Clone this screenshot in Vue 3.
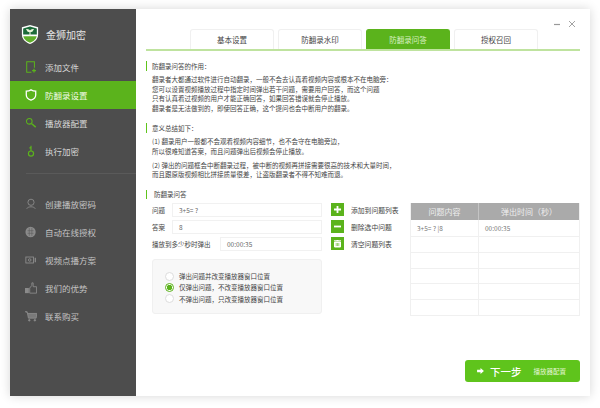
<script setup>
const topNav = [
  { t: '添加文件', i: 'file' },
  { t: '防翻录设置', i: 'shield', active: true },
  { t: '播放器配置', i: 'search' },
  { t: '执行加密', i: 'key' }
]
const bottomNav = [
  { t: '创建播放密码', i: 'user' },
  { t: '自动在线授权', i: 'globe' },
  { t: '视频点播方案', i: 'camera' },
  { t: '我们的优势', i: 'thumb' },
  { t: '联系购买', i: 'cart' }
]
const tabs = ['基本设置', '防翻录水印', '防翻录问答', '授权召回']
const intro = [
  '翻录者大都通过软件进行自动翻录，一般不会去认真看视频内容或根本不在电脑旁：',
  '您可以设置视频播放过程中指定时间弹出若干问题，需要用户回答，而这个问题',
  '只有认真看过视频的用户才能正确回答，如果回答错误就会停止播放。',
  '翻录者是无法做到的，即使回答正确，这个提问也会中断用户的翻录。'
]
const radios = [
  { t: '弹出问题并改变播放器窗口位置' },
  { t: '仅弹出问题，不改变播放器窗口位置', on: true },
  { t: '不弹出问题，只改变播放器窗口位置' }
]
const rows = [['3+5= ? |8', '00:00:35'], ['', ''], ['', ''], ['', ''], ['', ''], ['', '']]
</script>

<template>
  <div class="page">
    <div class="window">
      <aside class="side">
        <div class="brand">
          <svg class="logo" viewBox="0 0 20 22">
            <path d="M10 .5 L19 3 V11 C19 17 14 20 10 21.5 C6 20 1 17 1 11 V3 Z" fill="#fff"/>
            <path d="M10 2 L17.6 4.2 V11 H2.4 V4.2 Z" fill="#1d6b3a"/>
            <path d="M2.6 13 H17.4 C16.6 17 13 19 10 20.2 C7 19 3.4 17 2.6 13 Z" fill="#5fae2a"/>
            <path d="M10 12.5 V8 M10 8 C8.5 8 7 7 6.5 5.5 C8.2 5.5 9.6 6.4 10 8 C10.4 6.4 11.8 5.5 13.5 5.5 C13 7 11.5 8 10 8" stroke="#e8f3d8" stroke-width="1.2" fill="#e8f3d8"/>
          </svg>
          <span>金狮加密</span>
        </div>
        <nav class="nav">
          <div v-for="n in topNav" :key="n.t" class="item" :class="{ active: n.active }">
            <svg class="ico" viewBox="0 0 14 14" fill="none" stroke="#5bb31c" stroke-width="1.2">
              <template v-if="n.i === 'file'">
                <path d="M7.5 13 H2 V1 H11 V8"/><path d="M10.500 9 V13.500 M8.300 11.200 H12.800" stroke-width="1.500"/>
              </template>
              <path v-else-if="n.i === 'shield'" d="M7 1 C9 2.2 10.5 2.5 12.5 2.5 V7 C12.5 10 10 12 7 13 C4 12 1.500 10 1.500 7 V2.500 C3.500 2.500 5 2.200 7 1 Z" stroke="#fff" stroke-width="1.500"/>
              <template v-else-if="n.i === 'search'">
                <circle cx="5" cy="5" r="3.300"/><path d="M7.500 7.500 L12.500 11.800" stroke-width="1.600"/>
              </template>
              <template v-else>
                <circle cx="7" cy="10" r="3" stroke-width="1.400"/><path d="M7 7 V1 M7 2.800 L5.200 3.600" stroke-width="1.400"/>
              </template>
            </svg>
            <span>{{ n.t }}</span>
          </div>
        </nav>
        <div class="divider"></div>
        <nav class="nav lower">
          <div v-for="n in bottomNav" :key="n.t" class="item dim">
            <svg class="ico" viewBox="0 0 14 14" fill="none" stroke="#8e8e8e" stroke-width="1">
              <template v-if="n.i === 'user'">
                <circle cx="7" cy="5" r="3.600"/><path d="M2 12.500 C3.500 9.500 10.500 9.500 12 12.500"/>
              </template>
              <template v-else-if="n.i === 'globe'">
                <circle cx="6.500" cy="7" r="6" fill="#8a8a8a" stroke="none"/><path d="M3 5.500 H10 M3 8.500 H10 M5 2.500 V11.500 M8 2.500 V11.500" stroke="#5d5d5d" stroke-width=".7"/>
              </template>
              <template v-else-if="n.i === 'camera'">
                <rect x="1" y="3.500" width="9" height="7"/><circle cx="5.500" cy="7" r="1.500"/><path d="M12 4.500 V9.500" stroke-width="1.400"/>
              </template>
              <template v-else-if="n.i === 'thumb'">
                <rect x="0" y="7" width="4.500" height="6" fill="#8a8a8a" stroke="none"/><path d="M5.500 7 L8 4 V1 H9.500 V5.500 H13.500 V13 H5.500 Z"/>
              </template>
              <template v-else>
                <path d="M0 2 H2.500 L4 9.500 H13 L13.800 4 H3" fill="#7a7a7a"/><circle cx="5" cy="12" r=".9" fill="#8e8e8e"/><circle cx="11.500" cy="12" r=".9" fill="#8e8e8e"/>
              </template>
            </svg>
            <span>{{ n.t }}</span>
          </div>
        </nav>
      </aside>

      <main class="main">
        <div class="controls">
          <svg viewBox="0 0 8 8" class="ctl"><path d="M1 4.500 H7" stroke="#999" stroke-width="1.200"/></svg>
          <svg viewBox="0 0 8 8" class="ctl"><path d="M1 1 L7 7 M7 1 L1 7" stroke="#999" stroke-width=".9"/></svg>
        </div>
        <div class="tabs">
          <div v-for="(t, i) in tabs" :key="t" class="tab" :class="{ on: i === 2 }">{{ t }}</div>
        </div>

        <section class="sec first">
          <h4>防翻录问答的作用：</h4>
          <p v-for="l in intro" :key="l" class="line">{{ l }}</p>
        </section>

        <section class="sec second">
          <h4>意义总结如下：</h4>
          <div class="para">
            <p class="line">(1) 翻录用户一般都不会观看视频内容细节，也不会守在电脑旁边，</p>
            <p class="line">所以很难知道答案，而且问题弹出后视频会停止播放。</p>
          </div>
          <div class="para">
            <p class="line">(2) 弹出的问题框会中断翻录过程，被中断的视频再拼接需要很高的技术和大量时间，</p>
            <p class="line">而且跟原版视频相比拼接质量很差，让盗版翻录者不得不知难而退。</p>
          </div>
        </section>

        <section class="sec third">
          <h4>防翻录问答</h4>
          <div class="work">
            <div class="left">
              <div class="form">
                <div class="row">
                  <label>问题</label>
                  <div class="input">3+5= ?</div>
                  <button class="sq"><svg viewBox="0 0 13 13"><path d="M6.500 3 V10 M3 6.500 H10" stroke="#fff" stroke-width="1.800"/></svg></button>
                  <span class="act">添加到问题列表</span>
                </div>
                <div class="row">
                  <label>答案</label>
                  <div class="input">8</div>
                  <button class="sq"><svg viewBox="0 0 13 13"><path d="M3 6.500 H10" stroke="#fff" stroke-width="1.800"/></svg></button>
                  <span class="act">删除选中问题</span>
                </div>
                <div class="row">
                  <label class="wide">播放到多少秒时弹出</label>
                  <div class="input">00:00:35</div>
                  <button class="sq"><svg viewBox="0 0 13 13"><path d="M3.500 5 H9.500 V10 H3.500 Z M3 3.800 H10 M5.500 3.500 H7.500" fill="#fff" stroke="#fff"/><path d="M5.200 6 V9 M6.500 6 V9 M7.800 6 V9" stroke="#5bb31c" stroke-width=".6"/></svg></button>
                  <span class="act">清空问题列表</span>
                </div>
              </div>
              <div class="panel">
                <div v-for="r in radios" :key="r.t" class="radio">
                  <i class="dot" :class="{ on: r.on }"></i><span>{{ r.t }}</span>
                </div>
              </div>
            </div>
            <div class="table">
              <div class="thead"><div>问题内容</div><div>弹出时间（秒）</div></div>
              <div v-for="(r, i) in rows" :key="i" class="trow"><div>{{ r[0] }}</div><div>{{ r[1] }}</div></div>
            </div>
          </div>
        </section>

        <div class="foot">
          <button class="next">
            <svg viewBox="0 0 8 7" class="arrow"><path d="M0 2 H4 V0 L8 3.500 L4 7 V5 H0 Z" fill="#fff"/></svg>
            <b>下一步</b><small>播放器配置</small>
          </button>
        </div>
      </main>
    </div>
  </div>
</template>

<style scoped>
.page {
  width: 600px; height: 408px; box-sizing: border-box;
  padding: 9px 10px 12px; background: #fff; overflow: hidden;
  font-family: "Noto Sans CJK SC", "Liberation Sans", sans-serif;
}
.window { display: flex; height: 387px; background: #fff; box-shadow: 0 0 10px rgba(0,0,0,.16); }
.side { width: 126px; flex: none; background: #4d4d4d; color: #d6d6d6; font-size: 8.500px; }
.brand { display: flex; align-items: center; gap: 7px; height: 44px; box-sizing: border-box; padding: 7px 0 0 11px; color: #e4e4e4; font-size: 10px; }
.logo { width: 18px; height: 21px; }
.item { height: 28px; display: flex; align-items: center; gap: 8px; padding-left: 15px; }
.nav { display: flex; flex-direction: column; }
.item.active { background: #5bb31c; color: #f2fbe8; }
.ico { width: 12px; height: 12px; flex: none; }
.divider { height: 1px; margin: 8px 0 0 16px; background: #5a5a5a; }
.lower { margin-top: 16px; }
.item.dim { color: #c4c4c4; }

.main { flex: 1; min-width: 0; padding: 0 10px; color: #444; position: relative; }
.controls { height: 20px; display: flex; justify-content: flex-end; align-items: flex-end; gap: 7px; padding-right: 4px; }
.ctl { width: 8px; height: 8px; margin-bottom: 1px; }
.tabs { display: flex; gap: 4px; padding-left: 44px; border-bottom: 2px solid #bfe39f; height: 20px; }
.tab { width: 84px; height: 20px; box-sizing: border-box; border: 1px solid #f0f0f0; border-bottom: 0; border-radius: 3px 3px 0 0; display: flex; align-items: center; justify-content: center; font-size: 7.500px; color: #444; }
.tab.on { background: #5bb31c; color: #d8f0c0; border-color: #5bb31c; }
h4 { margin: 0; font-size: 6.500px; font-weight: 400; line-height: 10px; color: #444; border-left: 1px solid #5fc41c; padding-left: 5px; height: 10px; }
.line { margin: 0; font-size: 6.500px; line-height: 9.700px; color: #444; padding-left: 6px; white-space: nowrap; }
.first { margin-top: 10px; }
.first h4 { margin-bottom: 4px; }
.second { margin-top: 9.500px; }
.second h4 { margin-bottom: 4px; }
.para + .para { margin-top: 4px; }
.third { margin-top: 10px; }
.third h4 { padding-left: 7px; height: 9px; line-height: 9px; }
.work { display: flex; margin-top: 4px; padding-left: 6px; }
.left { width: 259px; flex: none; }
.form { display: flex; flex-direction: column; gap: 3.500px; }
.row { display: flex; align-items: center; height: 13.500px; font-size: 6.500px; }
.row label { width: 20px; flex: none; }
.row label.wide { width: 68px; }
.input { border: 1px solid #f1f1f1; height: 13.500px; box-sizing: border-box; display: flex; align-items: center; padding-left: 6px; width: 150px; color: #666; flex: none; }
.row label.wide + .input { width: 102px; }
.sq { width: 13px; height: 13px; padding: 0; border: 0; background: #5bb31c; margin-left: 9px; flex: none; display: block; }
.sq svg { display: block; width: 13px; height: 13px; }
.act { margin-left: 7px; white-space: nowrap; font-size: 6.800px; }
.panel { margin-top: 8px; width: 170px; height: 55px; box-sizing: border-box; background: #f8f8f8; border: 1px solid #f0f0f0; border-radius: 3px; padding: 11px 0 0 12px; font-size: 6.500px; }
.radio { display: flex; align-items: center; gap: 5px; height: 11.200px; }
.dot { width: 7px; height: 7px; border: 1px solid #ddd; border-radius: 50%; background: #fff; flex: none; }
.dot.on { border-color: #5bb31c; background: radial-gradient(circle, #5bb31c 0 2.500px, #fff 3px); }
.table { width: 168px; margin-left: -1px; border: 1px solid #f0f0f0; border-top: 0; font-size: 6.500px; align-self: flex-start; }
.thead, .trow { display: grid; grid-template-columns: 67px 1fr; }
.thead { height: 17px; background: #aaa; color: #eee; font-size: 8px; text-align: center; align-items: center; }
.thead div { height: 17px; line-height: 17px; }
.thead div + div { border-left: 1px solid #c4c4c4; }
.trow { height: 15.800px; border-top: 1px solid #f0f0f0; box-sizing: border-box; color: #777; align-items: center; }
.trow:nth-child(2) { border-top: 0; }
.trow div { padding-left: 6px; height: 100%; display: flex; align-items: center; }
.trow div + div { border-left: 1px solid #f0f0f0; }
.foot { position: absolute; right: 10px; bottom: 14px; }
.next { width: 115px; height: 22px; border: 0; border-radius: 3px; background: #5fc41c; color: #fff; display: flex; align-items: center; padding: 0 0 0 12px; font-family: inherit; }
.arrow { width: 7px; height: 6px; }
.next b { font-size: 10.500px; margin-left: 6px; font-weight: 500; }
.next small { font-size: 6.500px; margin-left: 12px; color: #e4f6d4; }
</style>
